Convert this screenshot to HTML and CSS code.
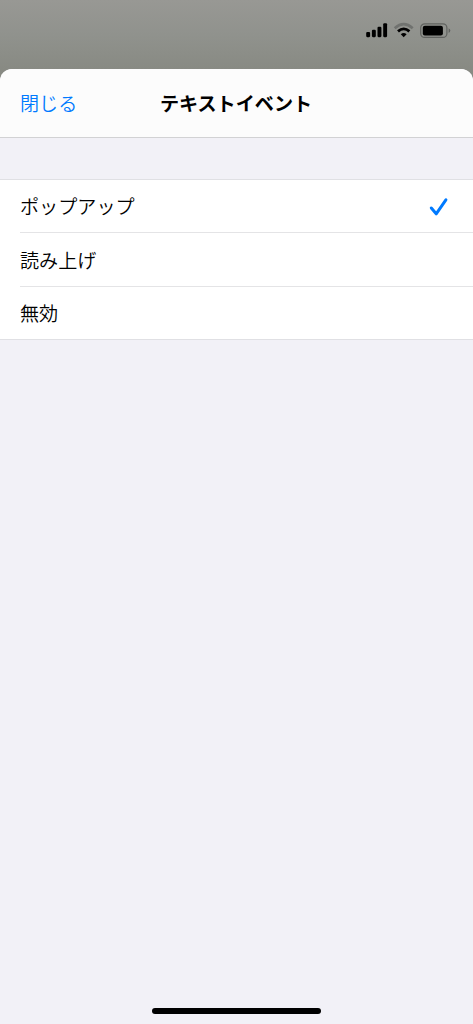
FILE: index.html
```html
<!DOCTYPE html>
<html lang="ja">
<head>
<meta charset="utf-8">
<title>テキストイベント</title>
<link rel="stylesheet" href="styles.css">
</head>
<body>
<div class="screen">
  <div class="status">
    <svg class="status-icons" width="86" height="18" viewBox="0 0 86 18">
      <g fill="#000">
        <rect x="1.2" y="11" width="3.9" height="5.2" rx="1.1"/>
        <rect x="6.9" y="8.8" width="3.9" height="7.4" rx="1.1"/>
        <rect x="12.5" y="5.8" width="3.9" height="10.4" rx="1.1"/>
        <rect x="18.2" y="2.2" width="3.9" height="14" rx="1.1"/>
      </g>
      <g fill="none">
        <path d="M29.7 7.2Q38.7 -0.9 47.7 7.2" stroke="#70726f" stroke-width="2.7"/>
        <path d="M33 10.4Q38.7 5.3 44.4 10.4" stroke="#000" stroke-width="2.8"/>
      </g>
      <path d="M35.8 13.2Q38.7 10.8 41.6 13.2L38.7 16.2Z" fill="#000"/>
      <rect x="55.7" y="2.8" width="26.2" height="13.6" rx="4" fill="none" stroke="#60625f" stroke-width="1.2"/>
      <rect x="57.8" y="4.8" width="20.1" height="9.8" rx="2" fill="#000"/>
      <path d="M83.6 7.2Q85.3 8 85.3 9.6Q85.3 11.2 83.6 12Z" fill="#60625f"/>
    </svg>
  </div>
  <main class="sheet">
    <header class="nav">
      <span class="close">閉じる</span>
      <h1 class="title">テキストイベント</h1>
    </header>
    <ul class="list">
      <li class="item"><div class="row"><span>ポップアップ</span>
        <svg width="20" height="20" viewBox="0 0 20 20"><path d="M2.3 12L7.2 17.8L16.9 3.8" fill="none" stroke="#007aff" stroke-width="3" stroke-linecap="round" stroke-linejoin="round"/></svg></div></li>
      <li class="item"><div class="row"><span>読み上げ</span></div></li>
      <li class="item"><div class="row"><span>無効</span></div></li>
    </ul>
    <div class="home"></div>
  </main>
</div>
</body>
</html>
```
FILE: styles.css
```css
* { box-sizing: border-box; }
body {
  margin: 0;
  font-family: "Noto Sans CJK JP", sans-serif;
  font-size: 19.1px;
  font-weight: 350;
  color: #000;
}
.screen {
  height: 1024px;
  display: flex;
  flex-direction: column;
  background: linear-gradient(#989894 0, #90928d 35px, #888a83 69px, #888a83 90px);
  overflow: hidden;
}
.status {
  height: 69px;
  padding: 21px 22px 0;
  display: flex;
  justify-content: flex-end;
  align-items: flex-start;
}
.status-icons { display: block; }
.sheet {
  flex: 1;
  display: flex;
  flex-direction: column;
  align-items: stretch;
  background: #f2f1f7;
  border-radius: 12px 12px 0 0;
  overflow: hidden;
}
.nav {
  height: 69px;
  display: grid;
  grid-template-columns: 1fr auto 1fr;
  align-items: center;
  padding: 0 21px 0 20px;
  background: #fcfcfc;
  border-bottom: 1px solid #d2d2d4;
}
.close { color: #007aff; }
.title { margin: 0; font-size: 19.1px; font-weight: 700; }
.list {
  list-style: none;
  margin: 41px 0 0;
  padding: 0;
  background: #fff;
  border-top: 1px solid #e0e0e4;
  border-bottom: 1px solid #e0e0e4;
}
.item { padding-left: 20px; }
.row {
  height: 52px;
  padding-right: 24px;
  display: flex;
  align-items: center;
  justify-content: space-between;
}
.item + .item .row { height: 54px; border-top: 1px solid #e4e4e6; }
.item + .item + .item .row { height: 53px; }
.home {
  width: 169px;
  height: 6px;
  margin: auto auto 10px;
  border-radius: 3px;
  background: #000;
}
```
